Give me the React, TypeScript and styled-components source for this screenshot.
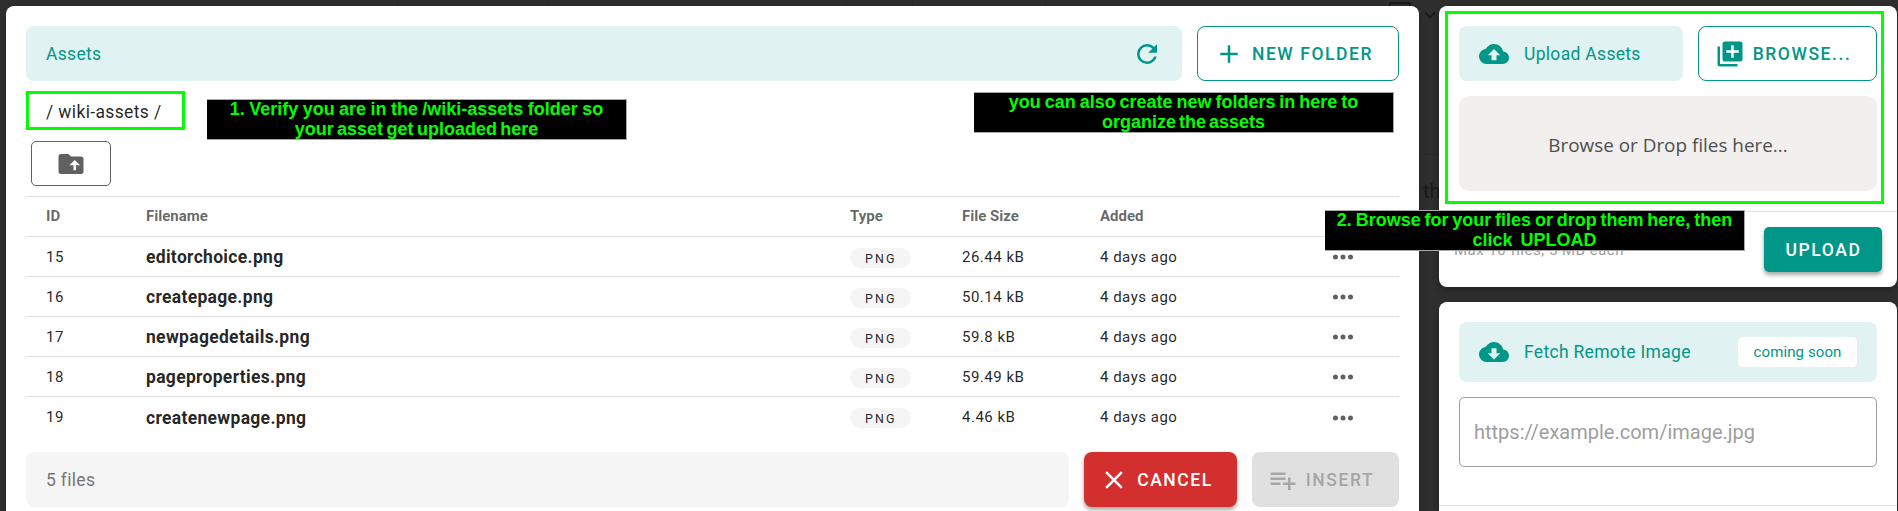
import React from "react";
import styled, { createGlobalStyle, css } from "styled-components";

const GlobalStyle = createGlobalStyle`
  * { box-sizing: border-box; }
  body { margin: 0; overflow: hidden; background: #2e2e2e; font-family: Roboto, "Liberation Sans", sans-serif; color: rgba(0,0,0,.87); }
`;

const teal = "#009688";

const icons = {
  refresh:
    "M17.65,6.35C16.2,4.9 14.21,4 12,4A8,8 0 0,0 4,12A8,8 0 0,0 12,20C15.73,20 18.84,17.45 19.73,14H17.65C16.83,16.33 14.61,18 12,18A6,6 0 0,1 6,12A6,6 0 0,1 12,6C13.66,6 15.14,6.69 16.22,7.78L13,11H20V4L17.65,6.35Z",
  plus: "M19,13H13V19H11V13H5V11H11V5H13V11H19V13Z",
  folderUp:
    "M20,6A2,2 0 0,1 22,8V18A2,2 0 0,1 20,20H4A2,2 0 0,1 2,18V6A2,2 0 0,1 4,4H10L12,6H20M10.75,13H14V17H16V13H19.25L15,8.75",
  cloudUp:
    "M14,13V17H10V13H7L12,8L17,13M19.35,10.03C18.67,6.59 15.64,4 12,4C9.11,4 6.6,5.64 5.35,8.03C2.34,8.36 0,10.9 0,14A6,6 0 0,0 6,20H19A5,5 0 0,0 24,15C24,12.36 21.95,10.22 19.35,10.03Z",
  cloudDown:
    "M17,13L12,18L7,13H10V9H14V13M19.35,10.03C18.67,6.59 15.64,4 12,4C9.11,4 6.6,5.64 5.35,8.03C2.34,8.36 0,10.9 0,14A6,6 0 0,0 6,20H19A5,5 0 0,0 24,15C24,12.36 21.95,10.22 19.35,10.03Z",
  boxes:
    "M19,11H15V15H13V11H9V9H13V5H15V9H19M20,2H8A2,2 0 0,0 6,4V16A2,2 0 0,0 8,18H20A2,2 0 0,0 22,16V4A2,2 0 0,0 20,2M4,6H2V20A2,2 0 0,0 4,22H18V20H4V6Z",
  dots:
    "M16,12A2,2 0 0,1 18,10A2,2 0 0,1 20,12A2,2 0 0,1 18,14A2,2 0 0,1 16,12M10,12A2,2 0 0,1 12,10A2,2 0 0,1 14,12A2,2 0 0,1 12,14A2,2 0 0,1 10,12M4,12A2,2 0 0,1 6,10A2,2 0 0,1 8,12A2,2 0 0,1 6,14A2,2 0 0,1 4,12Z",
  close:
    "M19,6.41L17.59,5L12,10.59L6.41,5L5,6.41L10.59,12L5,17.59L6.41,19L12,13.41L17.59,19L19,17.59L13.41,12L19,6.41Z",
  playlist:
    "M2,16H10V14H2M18,14V10H16V14H12V16H16V20H18V16H22V14M14,6H2V8H14M14,10H2V12H14V10Z",
  chevron: "M7.41,8.58L12,13.17L16.59,8.58L18,10L12,16L6,10L7.41,8.58Z",
};

const Glyph = styled.svg<{ $size: number }>`
  width: ${(p) => p.$size}px;
  height: ${(p) => p.$size}px;
  fill: currentColor;
  flex: none;
  display: block;
`;
const Icon = ({ name, size = 30 }: { name: keyof typeof icons; size?: number }) => (
  <Glyph viewBox="0 0 24 24" $size={size} aria-hidden="true">
    <path d={icons[name]} />
  </Glyph>
);

const Screen = styled.div`
  position: relative;
  width: 1898px;
  height: 511px;
  overflow: hidden;
  padding: 6px 1px 0 6px;
  display: flex;
  gap: 20px;
`;

const Backdrop = styled.div`
  position: absolute;
  inset: 0;
  color: #191919;
`;
const BackText = styled.span`
  position: absolute;
  left: 1423px;
  top: 179px;
  font-size: 20px;
  line-height: 24px;
`;
const BackChevron = styled.span`
  position: absolute;
  left: 1419px;
  top: 4px;
`;
const BackRule = styled.i<{ $x: number; $y: number; $w: number; $h: number }>`
  position: absolute;
  left: ${(p) => p.$x}px;
  top: ${(p) => p.$y}px;
  width: ${(p) => p.$w}px;
  height: ${(p) => p.$h}px;
  background: #292929;
`;
const BackOutline = styled.i`
  position: absolute;
  left: 1389px;
  top: 2px;
  width: 22px;
  height: 18px;
  border: 2px solid #191919;
  border-radius: 2px;
`;

const Card = styled.section<{ $height?: number }>`
  position: relative;
  background: #fff;
  border-radius: 8px;
  height: ${(p) => (p.$height ? `${p.$height}px` : "auto")};
  box-shadow: 0 3px 6px rgba(0, 0, 0, 0.3);
  flex: none;
`;
const MainCard = styled(Card)`
  width: 1413px;
  height: 540px;
  padding: 20px;
  display: flex;
  flex-direction: column;
`;
const SideColumn = styled.div`
  width: 458px;
  display: flex;
  flex-direction: column;
  gap: 15px;
`;
const CardBody = styled.div`
  padding: 20px;
  display: flex;
  flex-direction: column;
  gap: 15px;
`;
const Row = styled.div<{ $gap: number }>`
  display: flex;
  gap: ${(p) => p.$gap}px;
`;

const Bar = styled.div<{ $height?: number; $grey?: boolean }>`
  flex: 1 1 auto;
  display: flex;
  align-items: center;
  height: ${(p) => p.$height ?? 55}px;
  padding: 0 20px;
  border-radius: 8px;
  background: ${(p) => (p.$grey ? "#f5f5f5" : "#e0f2f1")};
  color: ${(p) => (p.$grey ? "#757575" : teal)};
  font-size: 17.5px;
  letter-spacing: 0.3125px;
`;
const BarLabel = styled.span`
  flex: 1;
`;
const IconLabel = styled(BarLabel)`
  margin-left: 15px;
`;

const Button = styled.button<{ $width: number; $height?: number; $kind: "outline" | "red" | "teal" | "off" }>`
  width: ${(p) => p.$width}px;
  height: ${(p) => p.$height ?? 55}px;
  flex: none;
  display: flex;
  align-items: center;
  justify-content: center;
  gap: 8px;
  padding: 0 9px 0 0;
  border: 0;
  border-radius: 8px;
  font: 500 17.5px Roboto, sans-serif;
  letter-spacing: 1.56px;
  ${(p) => p.$kind === "outline" && css`border: 1px solid ${teal}; background: #fff; color: ${teal};`}
  ${(p) => p.$kind === "red" && css`background: #d32f2f; color: #fff; box-shadow: 0 3px 4px rgba(0,0,0,.35);`}
  ${(p) => p.$kind === "teal" && css`background: ${teal}; color: #fff; border-radius: 5px; padding: 0 0 0 1px; box-shadow: 0 3px 4px rgba(0,0,0,.35);`}
  ${(p) => p.$kind === "off" && css`background: #e0e0e0; color: #a6a6a6;`}
`;

const Path = styled.div`
  width: 159px;
  height: 39px;
  margin-top: 10px;
  border: 3px solid #0f0;
  padding-left: 17px;
  line-height: 36px;
  font-size: 17.5px;
  letter-spacing: 0.36px;
`;
const UpButton = styled.button`
  width: 80px;
  height: 45px;
  margin: 11px 0 10px 5px;
  border: 1px solid #616161;
  border-radius: 5px;
  background: #fff;
  color: #616161;
  display: flex;
  align-items: center;
  justify-content: center;
  padding: 0;
`;

const Filename = styled.b`
  font-size: 17.5px;
  letter-spacing: 0.3125px;
  font-weight: 700;
`;
const Chip = styled.span`
  width: 61px;
  height: 20px;
  margin-top: 2px;
  border-radius: 10px;
  background: #f5f5f5;
  padding-left: 15px;
  font-size: 12.5px;
  line-height: 21px;
  letter-spacing: 2.08px;
`;
const Dots = styled.span`
  color: #616161;
`;
const TableRow = styled.div`
  display: grid;
  grid-template-columns: 100px 704px 112px 138px 228px 1fr;
  align-items: center;
  padding-left: 20px;
  height: 40px;
  border-top: 1px solid #e0e0e0;
  font-size: 15px;
  letter-spacing: 0.5px;
  &:nth-last-child(2) {
    height: 41px;
    ${Filename}, ${Dots} { padding-top: 1px; }
  }
`;
const HeadRow = styled(TableRow)`
  color: rgba(0, 0, 0, 0.6);
  font-weight: 700;
  letter-spacing: 0;
  padding-bottom: 2px;
`;
const Footer = styled(Row)`
  margin-top: 15px;
`;

const DropZone = styled.div`
  height: 95px;
  border-radius: 10px;
  background: #f1f0ef;
  color: #4f4f4f;
  display: flex;
  align-items: center;
  justify-content: center;
  padding-top: 3px;
  font: 18.9px/1 "Open Sans", "Noto Sans", sans-serif;
`;
const UploadActions = styled.div`
  height: 76px;
  border-top: 1px solid #e0e0e0;
  padding: 15px 15px 0;
  display: flex;
  justify-content: space-between;
`;
const Hint = styled.span`
  color: #9e9e9e;
  font-size: 15px;
  letter-spacing: 0.5px;
  line-height: 46px;
`;
const Badge = styled.span`
  width: 119px;
  height: 30px;
  border-radius: 5px;
  background: #fff;
  text-align: center;
  font-size: 15px;
  letter-spacing: 0.1px;
  line-height: 30px;
`;
const UrlInput = styled.input`
  height: 70px;
  border: 1px solid #9e9e9e;
  border-radius: 5px;
  padding: 0 14px;
  font: 20px Roboto, sans-serif;
  &::placeholder { color: #9e9e9e; opacity: 1; }
`;
const Rule = styled.div`
  margin-top: 18px;
  border-top: 1px solid #e0e0e0;
`;

const Highlight = styled.div`
  position: absolute;
  left: 1445px;
  top: 11px;
  width: 439px;
  height: 193px;
  border: 3px solid #0f0;
`;
const Note = styled.div<{ $x: number; $y: number }>`
  position: absolute;
  left: ${(p) => p.$x}px;
  top: ${(p) => p.$y}px;
  width: 420px;
  height: 41px;
  background: #000;
  border: 1px solid #a8a8a8;
  border-left-width: 0;
  color: #0f0;
  text-align: center;
  white-space: pre;
  font: 700 18px/20px "Liberation Sans", Arial, sans-serif;
`;
const NoteLine = styled.div<{ $gap: number }>`
  word-spacing: ${(p) => p.$gap}px;
  transform: translateY(-1px);
`;

const files = [
  [15, "editorchoice.png", "26.44 kB"],
  [16, "createpage.png", "50.14 kB"],
  [17, "newpagedetails.png", "59.8 kB"],
  [18, "pageproperties.png", "59.49 kB"],
  [19, "createnewpage.png", "4.46 kB"],
];

export default function App() {
  return (
    <>
      <GlobalStyle />
      <Screen>
        <Backdrop>
          <BackRule $x={397} $y={0} $w={1} $h={6} />
          <BackRule $x={547} $y={0} $w={1} $h={6} />
          <BackRule $x={846} $y={0} $w={1} $h={6} />
          <BackRule $x={912} $y={0} $w={1} $h={6} />
          <BackRule $x={1045} $y={0} $w={1} $h={6} />
          <BackRule $x={1419} $y={154} $w={20} $h={1} />
          <BackOutline />
          <BackChevron><Icon name="chevron" size={22} /></BackChevron>
          <BackText>th</BackText>
        </Backdrop>
        <MainCard>
          <Row $gap={15}>
            <Bar>
              <BarLabel>Assets</BarLabel>
              <Icon name="refresh" />
            </Bar>
            <Button $kind="outline" $width={202}><Icon name="plus" />NEW FOLDER</Button>
          </Row>
          <Path>/ wiki-assets /</Path>
          <UpButton><Icon name="folderUp" /></UpButton>
          <HeadRow>
            <span>ID</span><span>Filename</span><span>Type</span><span>File Size</span><span>Added</span>
          </HeadRow>
          {files.map(([id, name, size]) => (
            <TableRow key={id}>
              <span>{id}</span>
              <Filename>{name}</Filename>
              <Chip>PNG</Chip>
              <span>{size}</span>
              <span>4 days ago</span>
              <Dots><Icon name="dots" /></Dots>
            </TableRow>
          ))}
          <Footer $gap={15}>
            <Bar $grey>5 files</Bar>
            <Button $kind="red" $width={153}><Icon name="close" />CANCEL</Button>
            <Button $kind="off" $width={147}><Icon name="playlist" />INSERT</Button>
          </Footer>
        </MainCard>
        <SideColumn>
          <Card $height={281}>
            <CardBody>
              <Row $gap={15}>
                <Bar><Icon name="cloudUp" /><IconLabel>Upload Assets</IconLabel></Bar>
                <Button $kind="outline" $width={179}><Icon name="boxes" />BROWSE...</Button>
              </Row>
              <DropZone>Browse or Drop files here...</DropZone>
            </CardBody>
            <UploadActions>
              <Hint>Max 10 files, 5 MB each</Hint>
              <Button $kind="teal" $width={118} $height={45}>UPLOAD</Button>
            </UploadActions>
          </Card>
          <Card $height={240}>
            <CardBody>
              <Bar $height={60}>
                <Icon name="cloudDown" /><IconLabel>Fetch Remote Image</IconLabel><Badge>coming soon</Badge>
              </Bar>
              <UrlInput placeholder="https://example.com/image.jpg" />
            </CardBody>
            <Rule />
          </Card>
        </SideColumn>
        <Highlight />
        <Note $x={207} $y={99}>
          <NoteLine $gap={-0.6}>1. Verify you are in the /wiki-assets folder so</NoteLine>
          <NoteLine $gap={-1.6}>your asset get uploaded here</NoteLine>
        </Note>
        <Note $x={974} $y={92}>
          <NoteLine $gap={-1.1}>you can also create new folders in here to</NoteLine>
          <NoteLine $gap={-2}>organize the assets</NoteLine>
        </Note>
        <Note $x={1325} $y={210}>
          <NoteLine $gap={-1.2}>2. Browse for your files or drop them here, then</NoteLine>
          <NoteLine $gap={-0.9}>click  UPLOAD</NoteLine>
        </Note>
      </Screen>
    </>
  );
}
